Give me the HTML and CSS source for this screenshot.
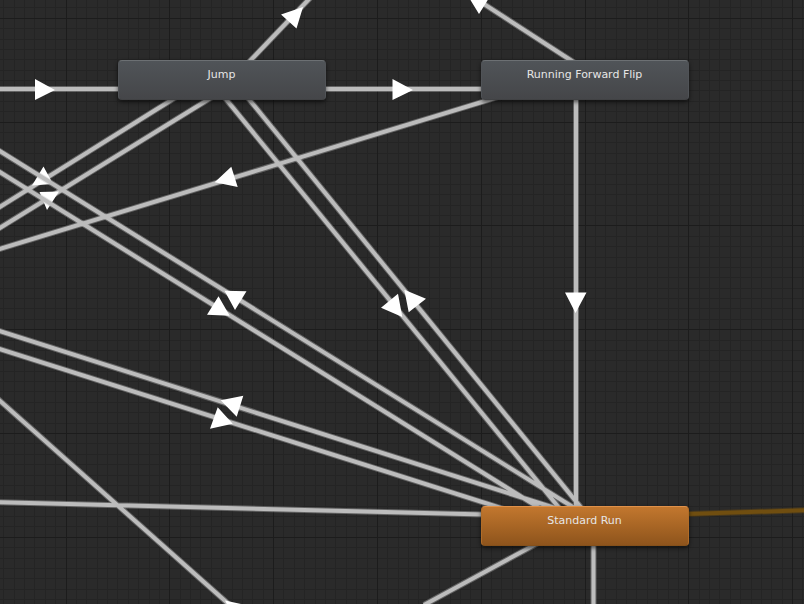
FILE: index.html
```html
<!DOCTYPE html>
<html lang="en">
<head>
<meta charset="utf-8">
<title>Animator</title>
<link rel="stylesheet" href="styles.css">
</head>
<body>
<main class="canvas">
  <svg class="graph" aria-hidden="true">
    <defs>
      <path id="links-back" d="M-10 89H120M324 89H484M249 62L312 -4M575 63L470 -5M178 96L-10 213M214 96L-10 234M500 96.500L-10 252"/>
      <path id="links-front" d="M-10 145L576 509M-10 166L541 509M-10 328L558 509M-10 346L504 509M225 98L560 509M248 98L583 510M576 98V508M-10 392L232 607M-10 502L484 514.500M538 543L424 605M593.500 544V610"/>
      <path id="link-entry" d="M687 514L814 510"/>
    </defs>
    <path id="grid-minor" class="grid-minor"/>
    <path id="grid-major" class="grid-major"/>
    <use href="#links-back" class="link-edge"/>
    <use href="#links-back" class="link"/>
    <path class="arrow" d="M35 79V100L55 90ZM392.500 79V100L413 90ZM281 14.500L303 7L296.500 28.500ZM468 -4L489 -2L479 14ZM43.500 166.500L53 184L32 185.500ZM39.500 192L59 191.500L47 210ZM214.700 182.300L231.300 166.700L237.700 187Z"/>
    <use href="#links-front" class="link-edge"/>
    <use href="#links-front" class="link"/>
    <path class="arrow" d="M565 292.500H586.500L575.500 313ZM224.500 290.700L246.500 291.300L235 310ZM218.500 296.300L229.700 315.700L207 314.700ZM220.700 400.300L243.300 395.700L236.700 416.700ZM217.700 407.300L232.700 423.700L210 428.700ZM381 307.700L398 293.700L402.300 317ZM404.300 289.700L426 298.700L408.700 312.300ZM225 600.500L241 604L232 614Z"/>
    <use href="#link-entry" class="link-edge entry"/>
    <use href="#link-entry" class="link entry"/>
  </svg>
  <button class="node jump" type="button">Jump</button>
  <button class="node flip" type="button">Running Forward Flip</button>
  <button class="node run" type="button">Standard Run</button>
</main>
<script src="grid.js"></script>
</body>
</html>
```
FILE: styles.css
```css
body {
  margin: 0;
  background: #2a2a2a;
}

.canvas {
  position: relative;
  min-height: 100vh;
  overflow: hidden;
  font-family: Verdana, "DejaVu Sans", sans-serif;
}

.graph {
  position: absolute;
  inset: 0;
  width: 100%;
  height: 100%;
}

.grid-minor,
.grid-major {
  fill: none;
  shape-rendering: crispEdges;
}

.grid-minor {
  stroke: #242424;
}

.grid-major {
  stroke: #1c1c1c;
}

.link,
.link-edge {
  fill: none;
  stroke: #bcbcbc;
}

.link {
  stroke-width: 4px;
}

.link-edge {
  stroke-width: 6px;
  stroke-opacity: 0.4;
}

.entry {
  stroke: #704e10;
}

.arrow {
  fill: #ffffff;
}

/* State nodes, placed freely on the canvas */
.node {
  position: absolute;
  box-sizing: border-box;
  width: 208px;
  height: 40px;
  padding: 0 1px 10px 0;
  border: 1px solid #505357;
  border-top-color: #6c7073;
  border-bottom-color: #414244;
  border-radius: 4px;
  background: linear-gradient(#505458, #454649);
  box-shadow: 0 2px 4px rgba(0, 0, 0, 0.6);
  color: #e6e6e6;
  font: inherit;
  font-size: 11px;
  line-height: 14px;
  text-align: center;
}

.jump {
  left: 118px;
  top: 60px;
}

.flip {
  left: 481px;
  top: 60px;
}

.run {
  left: 481px;
  top: 506px;
  border-color: #e0914a #b06c28 #85501a;
  background: linear-gradient(#c2772e, #8e541c);
}
```
FILE: grid.js
```js
// Ten minor cells to each major cell; lines snap to whole pixels.
const STEP = 10.38;
const ORIGIN = { x: 66, y: 18 };

function drawGrid() {
  const width = window.innerWidth;
  const height = window.innerHeight;
  let minor = "";
  let major = "";
  for (let i = -10; ORIGIN.x + i * STEP < width || ORIGIN.y + i * STEP < height; i++) {
    const x = Math.floor(ORIGIN.x + i * STEP) + 0.5;
    const y = Math.floor(ORIGIN.y + i * STEP + 0.3) + 0.5;
    const lines = `M${x} 0V${height}M0 ${y}H${width}`;
    if (i % 10 === 0) major += lines;
    else minor += lines;
  }
  document.getElementById("grid-minor").setAttribute("d", minor);
  document.getElementById("grid-major").setAttribute("d", major);
}

drawGrid();
window.addEventListener("resize", drawGrid);
```
